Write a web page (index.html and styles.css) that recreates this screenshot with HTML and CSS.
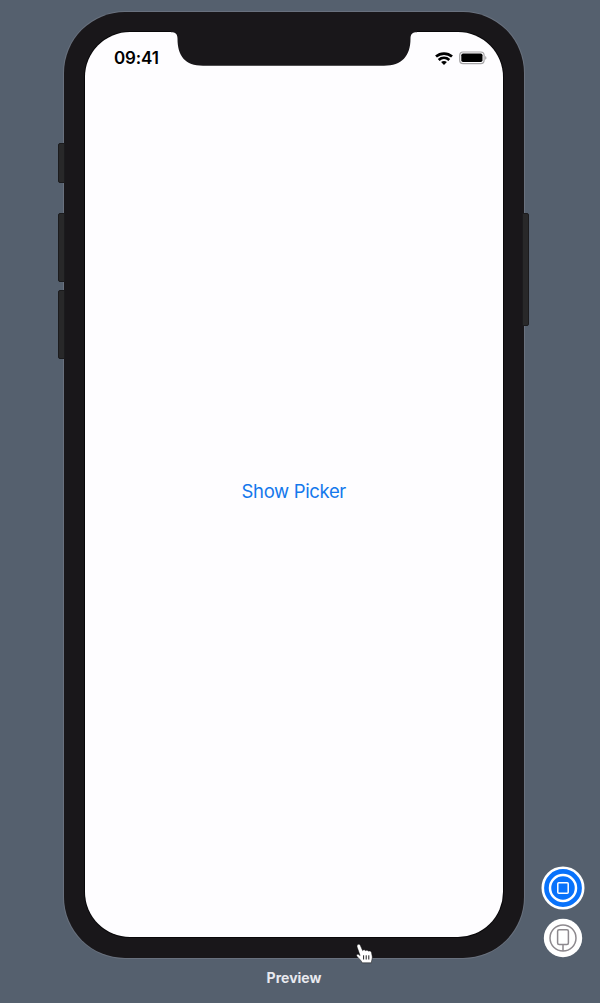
FILE: index.html
```html
<!DOCTYPE html>
<html lang="en">
<head>
<meta charset="utf-8">
<title>Preview</title>
<link rel="stylesheet" href="styles.css">
</head>
<body>
<main class="canvas">
  <section class="preview">
    <div class="phone">
      <span class="key mute"></span>
      <span class="key volume-up"></span>
      <span class="key volume-down"></span>
      <span class="key power"></span>
      <div class="screen">
        <svg class="notch" width="246" height="36" viewBox="0 0 246 36"><path d="M0 0V1.200C4.500 1.200 6.500 3 6.500 7.500C6.500 25 14 34.700 32 34.700H213C231 34.700 239.500 25 239.500 7.500C239.500 3 241.500 1.200 246 1.200V0Z" fill="#19171a"/></svg>
        <header class="status">
          <time class="time">09:41</time>
          <div class="indicators">
            <svg width="18" height="13" viewBox="0 0 18 13"><g fill="none" stroke="#000" stroke-width="2.700"><path d="M1 4.600C5.500.6 12.500.6 17 4.600"/><path d="M3.700 8C6.800 5.200 11.200 5.200 14.300 8"/></g><path d="M6.100 10C7.800 8.500 10.200 8.500 11.900 10L9 12.900Z"/></svg>
            <svg width="28" height="14" viewBox="0 0 28 14"><rect x=".7" y="1" width="24.400" height="11.600" rx="3.300" fill="none" stroke="#a5a4a6" stroke-width="1.200"/><rect x="2.300" y="2.600" width="21.200" height="8.400" rx="1.700"/><path d="M26.200 4.900C27.900 5.500 27.900 8.100 26.200 8.700Z" fill="#a5a4a6"/></svg>
          </div>
        </header>
        <div class="content"><button class="link">Show Picker</button></div>
      </div>
      <svg class="pointer" width="20" height="23" viewBox="0 0 20 23"><path d="M2.600 1.700C3.600.9 4.900 1.300 5.400 2.500L7.600 7.600C8.500 6.500 10 6.600 10.500 7.700C11.600 6.800 13 7.100 13.500 8.200C15 7.500 16.100 8.200 16.500 9.600L17.200 13.200C17.600 15.300 16.600 16.900 16.300 19.800H7.200C6.500 17.600 4.100 15.800 2.100 13.500C.7 11.800 2.200 10.700 3.700 11.500L5.100 12.600L2.100 4.100C1.800 3.100 2 2.200 2.600 1.700Z" fill="#fff" stroke="#111" stroke-width=".5"/><path d="M8.600 12.300V16.500M11.200 12.300V16.500M13.800 12.300V16.500" stroke="#222" stroke-width="1"/></svg>
    </div>
    <div class="caption">Preview</div>
  </section>
  <aside class="tools">
    <button class="tool live" aria-label="Live preview"><svg width="44" height="44" viewBox="0 0 44 44"><circle cx="22" cy="22" r="20.200" fill="#0872fb" stroke="#fff" stroke-width="2.600"/><circle cx="22" cy="22" r="13" fill="none" stroke="#fff" stroke-width="2.500"/><rect x="16.800" y="16.800" width="10.400" height="10.400" rx="1" fill="none" stroke="#fff" stroke-width="1.500"/></svg></button>
    <button class="tool device" aria-label="Preview on device"><svg width="40" height="40" viewBox="0 0 40 40"><circle cx="20" cy="20" r="19.200" fill="#fff"/><g fill="none" stroke="#8d898e" stroke-width="1.500"><circle cx="20" cy="20" r="13"/><rect x="14.600" y="11.800" width="10.800" height="14.800" rx="1.500"/><path d="M20 26.600V33"/></g></svg></button>
  </aside>
</main>
</body>
</html>
```
FILE: styles.css
```css
* { box-sizing: border-box; }
body { margin: 0; background: #55606e; font-family: Inter, "Liberation Sans", sans-serif; }
button { padding: 0; border: 0; background: none; font: inherit; }
svg { display: block; }

.canvas {
  display: grid;
  grid-template-columns: 460px 76px;
  height: 1003px;
  padding: 12px 0 0 64px;
  overflow: hidden;
}

.phone {
  position: relative;
  height: 946px;
  padding: 20px 21.500px 21px 21px;
  border-radius: 61px;
  background: #19171a;
  box-shadow: 0 0 0 1px #69717e;
}
.screen {
  position: relative;
  height: 905px;
  border-radius: 45px;
  background: #fefdff;
  box-shadow: 0 0 0 1px #080709;
  display: flex;
  flex-direction: column;
}
.notch { position: absolute; left: 86px; top: -1px; }

.key {
  position: absolute;
  left: -6px;
  width: 7px;
  border: 1px solid #1b1b1d;
  border-radius: 2px 0 0 2px;
  background: #282829;
}
.mute { top: 131px; height: 40px; }
.volume-up { top: 201px; height: 69px; }
.volume-down { top: 278px; height: 69px; }
.power { left: auto; right: -5px; top: 201px; height: 113px; border-radius: 0 2px 2px 0; }

.status {
  height: 52px;
  padding: 0 15.500px 0 29px;
  display: flex;
  align-items: center;
  justify-content: space-between;
}
.time { font-size: 17px; line-height: 20px; font-weight: 600; letter-spacing: -.15px; color: #000; }
.indicators { display: flex; align-items: center; gap: 6px; }
.content {
  flex: 1;
  display: flex;
  align-items: center;
  justify-content: center;
  padding-bottom: 40px;
}
.link { font-size: 18.500px; line-height: 24px; letter-spacing: -.35px; color: #1478ec; }
.pointer { position: absolute; left: 291px; top: 931px; }
.caption {
  margin-top: 11px;
  text-align: center;
  font-size: 14px;
  line-height: 18px;
  font-weight: 700;
  color: #e8e9ef;
}

.tools {
  display: flex;
  flex-direction: column;
  align-items: center;
  justify-content: flex-end;
  gap: 8px;
  padding: 0 0 45px 1px;
}
```
